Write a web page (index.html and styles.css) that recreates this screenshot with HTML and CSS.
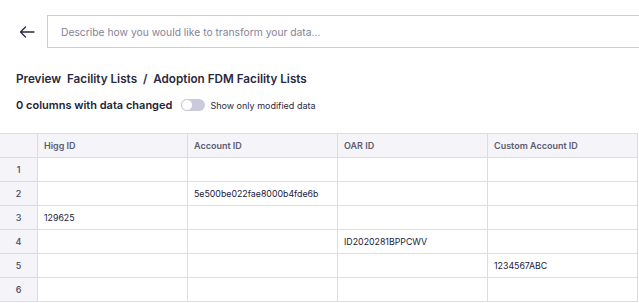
FILE: index.html
```html
<!DOCTYPE html>
<html lang="en">
<head>
    <meta charset="UTF-8">
    <meta name="viewport" content="width=device-width, initial-scale=1.0">
    <title>Preview</title>
    <link rel="stylesheet" href="styles.css">
</head>
<body>
    <div class="top">
        <a class="back" href="javascript:;">
            <svg width="16" height="12" viewBox="0 0 16 12"><path d="M15 6H1.5M6.5 1L1.5 6l5 5" fill="none" stroke="#2a2940" stroke-width="1.3" stroke-linecap="round" stroke-linejoin="round"/></svg>
        </a>
        <input class="prompt" type="text" placeholder="Describe how you would like to transform your data...">
    </div>

    <h1 class="title">Preview&nbsp; Facility Lists &nbsp;/&nbsp; Adoption FDM Facility Lists</h1>

    <div class="changes">
        <span class="count">0 columns with data changed</span>
        <span class="toggle"><span class="knob"></span></span>
        <span class="toggle-label">Show only modified data</span>
    </div>

    <div class="grid">
        <div class="row head">
            <div class="cell num"></div>
            <div class="cell">Higg ID</div>
            <div class="cell">Account ID</div>
            <div class="cell">OAR ID</div>
            <div class="cell">Custom Account ID</div>
        </div>
        <div class="row">
            <div class="cell num">1</div>
            <div class="cell"></div>
            <div class="cell"></div>
            <div class="cell"></div>
            <div class="cell"></div>
        </div>
        <div class="row">
            <div class="cell num">2</div>
            <div class="cell"></div>
            <div class="cell">5e500be022fae8000b4fde6b</div>
            <div class="cell"></div>
            <div class="cell"></div>
        </div>
        <div class="row">
            <div class="cell num">3</div>
            <div class="cell">129625</div>
            <div class="cell"></div>
            <div class="cell"></div>
            <div class="cell"></div>
        </div>
        <div class="row">
            <div class="cell num">4</div>
            <div class="cell"></div>
            <div class="cell"></div>
            <div class="cell">ID2020281BPPCWV</div>
            <div class="cell"></div>
        </div>
        <div class="row">
            <div class="cell num">5</div>
            <div class="cell"></div>
            <div class="cell"></div>
            <div class="cell"></div>
            <div class="cell">1234567ABC</div>
        </div>
        <div class="row">
            <div class="cell num">6</div>
            <div class="cell"></div>
            <div class="cell"></div>
            <div class="cell"></div>
            <div class="cell"></div>
        </div>
    </div>
</body>
</html>
```

FILE: styles.css
```css
*{
    margin: 0;
    padding: 0;
    box-sizing: border-box;
}
body{
    font-family: Inter, "Noto Sans", sans-serif;
    color: #22213a;
    background: #fff;
    overflow: hidden;
}
.top{
    display: flex;
    align-items: center;
    padding-top: 15px;
}
.back{
    display: flex;
    width: 47px;
    justify-content: center;
    padding-left: 7px;
}
.prompt{
    flex: 1;
    height: 33px;
    border: 1px solid #cfcbdb;
    border-right: none;
    padding: 0 13px;
    font-family: inherit;
    font-size: 10.3px;
    color: #22213a;
    outline: none;
}
.prompt::placeholder{
    color: #85849a;
}
.title{
    margin: 23px 0 0 16px;
    font-size: 11.7px;
    font-weight: 600;
    line-height: 16px;
    color: #2a2940;
}
.changes{
    display: flex;
    align-items: center;
    margin: 11px 0 0 16px;
    height: 14px;
}
.count{
    font-size: 11px;
    font-weight: 600;
    color: #1f1e33;
}
.toggle{
    position: relative;
    width: 24px;
    height: 12px;
    margin-left: 9px;
    border-radius: 6px;
    background: #cbcadd;
}
.knob{
    position: absolute;
    left: 0;
    top: 0;
    width: 12px;
    height: 12px;
    border-radius: 50%;
    background: #fff;
    border: 1px solid #cbcadd;
}
.toggle-label{
    margin-left: 5px;
    font-size: 9px;
    color: #2a2940;
}
.grid{
    margin-top: 21px;
    width: 638px;
    border-top: 1px solid #dcdbe6;
}
.row{
    display: grid;
    grid-template-columns: 38px 150px 150px 150px 150px;
    height: 24px;
}
.cell{
    display: flex;
    align-items: center;
    padding-left: 6px;
    border-right: 1px solid #dcdbe6;
    border-bottom: 1px solid #dcdbe6;
    font-size: 8.8px;
    color: #22213a;
    white-space: nowrap;
}
.head .cell{
    background: #f4f4f9;
    font-size: 9px;
    font-weight: 600;
    color: #5c5b72;
}
.cell.num{
    justify-content: center;
    padding-left: 0;
    background: #f4f4f9;
    font-size: 9px;
    color: #4a4960;
    font-weight: 500;
}
```
